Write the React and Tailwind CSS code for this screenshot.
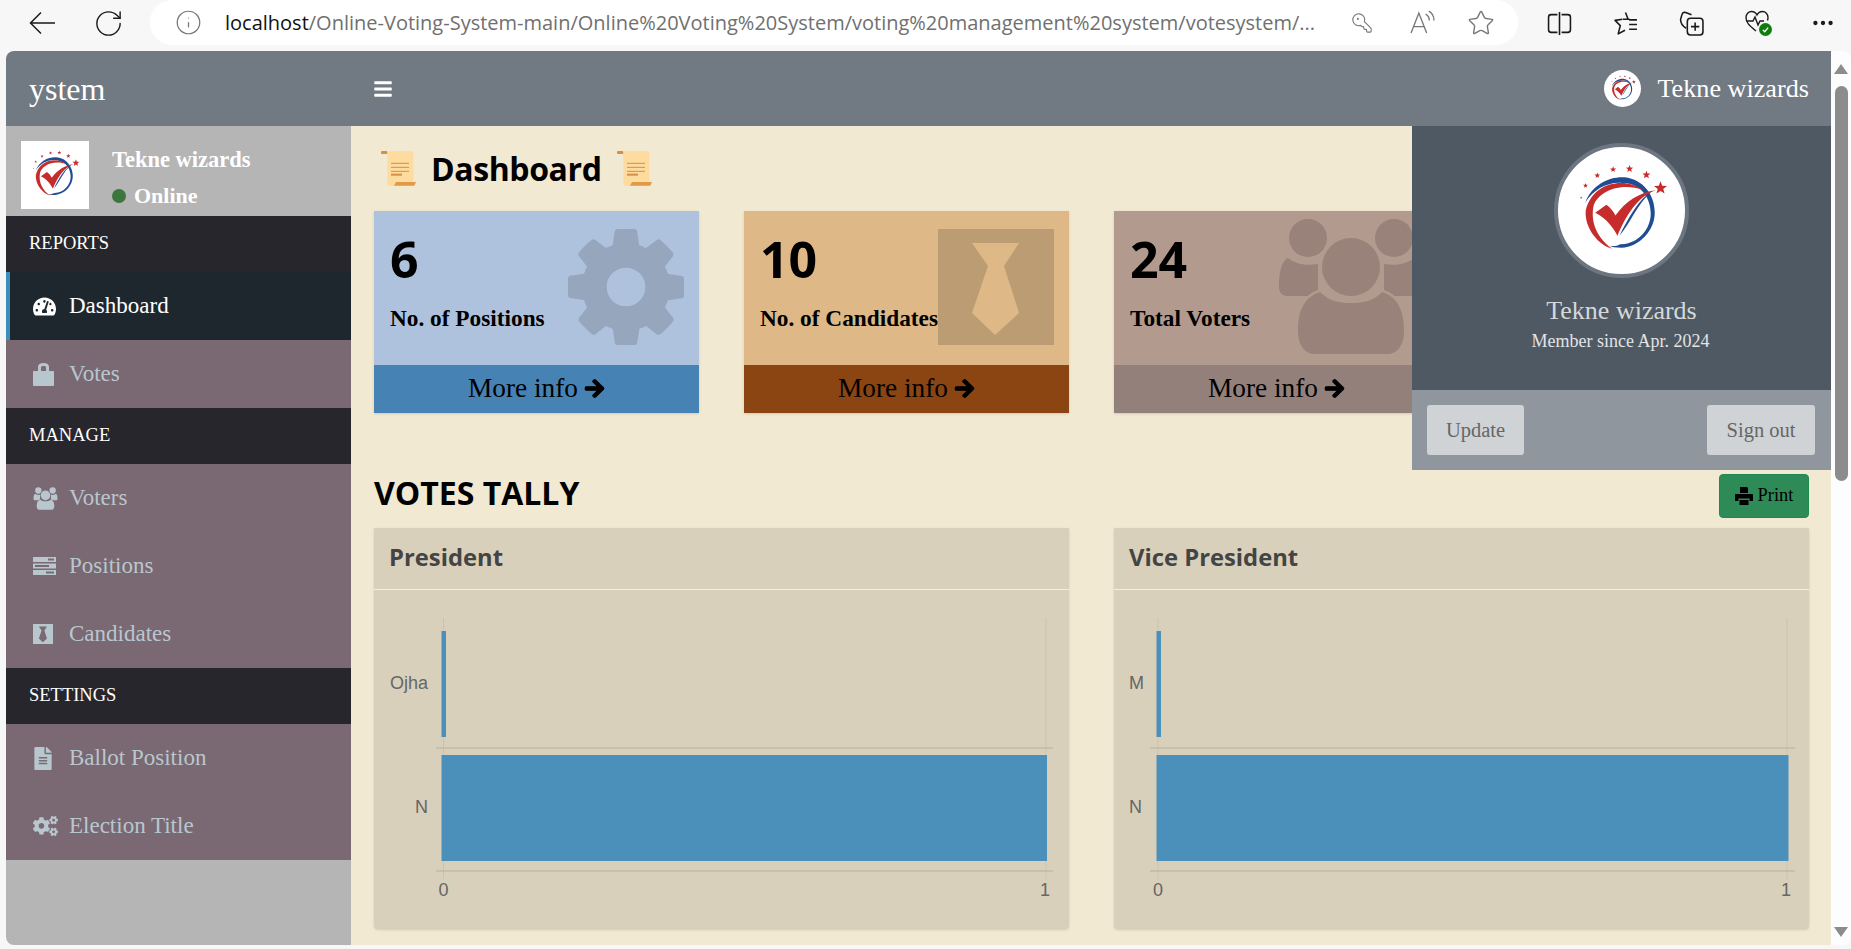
import React from "react";
import { RotateCw, Info, KeyRound, Star, MoreHorizontal } from "lucide-react";
import { FaTachometerAlt, FaFileAlt, FaCogs, FaArrowRight, FaBars } from "react-icons/fa";

const Logo = ({ className }) => {
  const stars = [
    [-40, -12.7, 1.3],
    [-35.7, -24.7, 2.6],
    [-24, -34.7, 3],
    [-8.3, -40.7, 3.2],
    [8, -41.3, 3.8],
    [24.7, -35.3, 4.2],
    [38.7, -22.3, 6.8],
  ];
  const starPath = (x, y, r) => {
    let d = "";
    for (let i = 0; i < 10; i++) {
      const rad = i % 2 ? r * 0.42 : r;
      const a = (Math.PI / 5) * i - Math.PI / 2;
      d += `${i ? "L" : "M"}${(x + rad * Math.cos(a)).toFixed(2)} ${(y + rad * Math.sin(a)).toFixed(2)}`;
    }
    return d + "Z";
  };
  return (
    <svg viewBox="-63 -63 126 126" className={className}>
      {stars.map(([x, y, r]) => (
        <path key={x} d={starPath(x, y, r)} fill="#c62c2c" />
      ))}
      <path d="M-36 -8C-29 -26 -12 -34 3 -33C22 -31 33 -15 33 2C33 20 18 36 0 37C-6 37 -10 36 -12 35C-2 36 -4 33.5 0 33.5C16 33 29 19 29 3C29 -12 20 -25 5 -27C-12 -30 -27 -22 -36 -8Z" fill="#1e4d94" />
      <path d="M22 -20C5 -33 -28 -30 -35.500 0C-37 18 -22 35 -9 38C-21 30 -31 15 -28 -3C-25 -18 -2 -29 22 -20Z" fill="#c62c2c" />
      <path d="M34 -20C20 -15 8 -3 -4 25C-9 16 -15 8 -26 2.300L-15 -5.700C-11 -3 -8 1 -6 5C4 -9 18 -18 34 -20Z" fill="#c62c2c" />
      <path d="M30 -19C17 -11 7 7 -2 25C8 14 16 -7 30 -19Z" fill="#1e4d94" />
    </svg>
  );
};

const ScrollIcon = () => (
  <svg viewBox="33 33 105 105" className="h-[35px] w-[35px] shrink-0">
    <rect x="52" y="33" width="78" height="105" rx="8" fill="#fedb9e" />
    <rect x="33" y="33" width="19" height="9" rx="3" fill="#d98f43" />
    <path d="M78 126H138L133 137H72Z" fill="#e29a48" />
    <path d="M63 70H117M63 82H117M63 94H117" stroke="#d98f43" strokeWidth="3" />
    <rect x="63" y="101" width="33" height="6" fill="#d98f43" />
  </svg>
);

// fa-cog from font awesome 4
const GearIcon = ({ className }) => (
  <svg viewBox="128 128 1536 1536" className={className} fill="currentColor">
    <path d="M1152 896q0-106-75-181t-181-75-181 75-75 181 75 181 181 75 181-75 75-181zm512-109v222q0 12-8 23t-20 13l-185 28q-19 54-39 91 35 50 107 138 10 12 10 25t-9 23q-27 37-99 108t-94 71q-12 0-26-9l-138-108q-44 23-91 38-16 136-29 186-7 28-36 28h-222q-14 0-24.5-8.5t-11.5-21.5l-28-184q-49-16-90-37l-141 107q-10 9-25 9-14 0-25-11-126-114-165-168-7-10-7-23 0-12 8-23 15-21 51-66.5t54-70.5q-27-50-41-99l-183-27q-13-2-21-12.5t-8-23.5v-222q0-12 8-23t19-13l186-28q14-46 39-92-40-57-107-138-10-12-10-24 0-10 9-23 26-36 98.5-107.5t94.5-71.5q13 0 26 10l138 107q44-23 91-38 16-136 29-186 7-28 36-28h222q14 0 24.5 8.5t11.5 21.5l28 184q49 16 90 37l142-107q9-9 24-9 13 0 25 10 129 119 165 170 7 8 7 22 0 12-8 23-15 21-51 66.5t-54 70.5q26 50 41 98l183 28q13 2 21 12.5t8 23.5z" />
  </svg>
);

const TieIcon = ({ className }) => (
  <svg viewBox="0 0 116 116" className={className} fill="currentColor">
    <path fillRule="evenodd" d="M0 0H116V116H0ZM34 14H81L66 37L81 84L57 106L34 84L50 37Z" />
  </svg>
);

// three people, the gaps are strokes in the colour behind the icon
const PeopleIcon = ({ className, fill, gap }) => (
  <svg viewBox="0 0 144 144" className={className} fill={fill}>
    <circle cx="29" cy="27" r="19" />
    <circle cx="115" cy="27" r="19" />
    <path d="M9 47C16 53 26 55 39 53V85H8C3 85 0 81 0 76C0 64 2 50 9 47Z" />
    <path d="M135 47C128 53 118 55 105 53V85H136C141 85 144 81 144 76C144 64 142 50 135 47Z" />
    <path
      d="M19 120C19 100 25 86 41 81C50 90 60 92 72 92C84 92 95 90 103 81C119 86 125 100 125 120C125 135 118 143 108 143H36C26 143 19 135 19 120Z"
      stroke={gap}
      strokeWidth="5"
      paintOrder="stroke"
    />
    <circle cx="72" cy="56" r="29" stroke={gap} strokeWidth="5" paintOrder="stroke" />
  </svg>
);

const TasksIcon = ({ className }) => (
  <svg viewBox="0 0 23 18" className={className} fill="currentColor">
    <path fillRule="evenodd" d="M0 0H23V5H0ZM15 1.500V3.500H21V1.500ZM0 6.500H23V11.500H0ZM2 8V10H16V8ZM0 13H23V18H0ZM13 14.500V16.500H21V14.500Z" />
  </svg>
);

const LockIcon = ({ className }) => (
  <svg viewBox="0 0 21 23" className={className} fill="currentColor">
    <path fillRule="evenodd" d="M5 8V4C5 1.500 7 0 10.500 0C14 0 16 1.500 16 4V8H20C20.600 8 21 8.400 21 9V22C21 22.600 20.600 23 20 23H1C0.400 23 0 22.600 0 22V9C0 8.400 0.400 8 1 8ZM8 8H13V4.500C13 3.500 12 3 10.500 3C9 3 8 3.500 8 4.500Z" />
  </svg>
);

const PrintIcon = ({ className }) => (
  <svg viewBox="0 0 18 18" className={className} fill="currentColor">
    <path d="M5 0H12L13 1V6H5ZM1 7H17C17.600 7 18 7.400 18 8V14H14.500V11.500H3.500V14H0V8C0 7.400 0.400 7 1 7ZM4.500 13H13.500V18H4.500Z" />
  </svg>
);

const StatBox = ({ value, label, box, foot, icon }) => (
  <div className={`relative h-[202px] w-[325px] shrink-0 overflow-hidden shadow-sm ${box}`}>
    <div className="h-[154px] pt-[23px] pl-[16px] text-black">
      <div className="font-['Open_Sans'] text-[50px] leading-[50px] font-bold">{value}</div>
      <div className="mt-[21px] text-[23.300px] leading-[26px] font-bold whitespace-nowrap">{label}</div>
    </div>
    {icon}
    <div className={`flex h-[48px] items-center justify-center gap-[6px] pb-[1px] text-[27.300px] text-black ${foot}`}>
      More info <FaArrowRight className="h-[21px] w-[21px] stroke-current stroke-[30]" />
    </div>
  </div>
);

const Chart = ({ title, labels, x0, x1, lineFrom, lineTo, barFrom, barTo }) => (
  <div className="h-[401px] rounded-b-[4px] bg-[#d8d0bb] shadow-sm">
    <div className="flex h-[62px] items-center border-b border-[#f2eee2] pb-[2px] pl-[15px] font-['Open_Sans'] text-[23.800px] font-bold text-[#444]">
      {title}
    </div>
    <svg className="block h-[339px] w-full">
      <path d={`M${x0} 28V289M${x1} 28V289`} stroke="#cbc3af" strokeWidth="1" fill="none" />
      <path d={`M${lineFrom} 158H${lineTo}M${lineFrom} 281H${lineTo}`} stroke="#c2baa6" strokeWidth="1.500" fill="none" />
      <rect x={barFrom} y="41" width="4.500" height="106" fill="#4b90bb" />
      <rect x={barFrom} y="165" width={barTo - barFrom} height="106" fill="#4b90bb" />
      <g fontFamily="Liberation Sans" fontSize="18" fill="#666">
        <text x={labels[0].x} y="99" textAnchor="end">{labels[0].text}</text>
        <text x={labels[1].x} y="223" textAnchor="end">{labels[1].text}</text>
        <text x={x0} y="306" textAnchor="middle">0</text>
        <text x={x1 - 1} y="306" textAnchor="middle">1</text>
      </g>
    </svg>
  </div>
);

const SectionHead = ({ children }) => (
  <div className="flex h-[56px] items-center bg-[#27262c] pl-[23px] text-[18.500px] text-white">
    <span>{children}</span>
  </div>
);

const NavItem = ({ icon, children, active }) => (
  <div
    className={`flex h-[68px] items-center border-l-4 pl-[23px] text-[23px] ${
      active ? "border-[#3c8dbc] bg-[#1f272e] text-white" : "border-transparent text-[#b8c7ce]"
    }`}
  >
    <span className="flex w-[36px] items-center">{icon}</span>
    {children}
  </div>
);

const BrowserBar = () => (
  <div className="flex h-[51px] shrink-0 items-start text-[#1a1a1a]">
    <div className="flex h-[46px] w-[150px] items-center pl-[29px]">
      <svg viewBox="0 0 26 24" className="h-[24px] w-[26px]" fill="none" stroke="currentColor" strokeWidth="1.500">
        <path d="M26 12H1.500M12 1.500L1.500 12L12 22.500" />
      </svg>
      <RotateCw className="ml-[38px] h-[31px] w-[31px]" strokeWidth={1.1} />
    </div>
    <div className="flex h-[45px] w-[1368px] items-center rounded-[22px] bg-white pl-[25px] text-[#707070]">
      <Info className="h-[27px] w-[27px] shrink-0 text-[#777]" strokeWidth={1.1} />
      <span className="ml-[23px] w-[1090px] shrink-0 font-['Open_Sans'] text-[20px] whitespace-nowrap">
        <span className="text-[#111]">localhost</span>/Online-Voting-System-main/Online%20Voting%20System/voting%20management%20system/votesystem/...
      </span>
      <KeyRound className="ml-[36px] h-[22px] w-[22px] shrink-0 -scale-x-100 text-[#777]" strokeWidth={1.2} />
      <svg viewBox="0 0 24 24" className="ml-[37px] h-[25px] w-[25px] shrink-0 text-[#777]" fill="none" stroke="currentColor" strokeWidth="1.300">
        <path d="M1 22L8.500 3L16 22M3.500 16H13.500M15 4C17 5 18.500 7.500 18.500 10M18 1C21 2.500 23 6 23 10" />
      </svg>
      <Star className="ml-[32px] h-[28px] w-[28px] shrink-0 text-[#777]" strokeWidth={1.2} />
    </div>
    <div className="flex h-[46px] flex-1 items-center pl-[29px]">
      <svg viewBox="0 0 24 24" className="h-[25px] w-[25px]" fill="none" stroke="currentColor" strokeWidth="1.500">
        <path d="M10 3.500H4C2.500 3.500 1.500 4.500 1.500 6V18C1.500 19.500 2.500 20.500 4 20.500H10M14 3.500H20C21.500 3.500 22.500 4.500 22.500 6V18C22.500 19.500 21.500 20.500 20 20.500H14M12 1V23" />
      </svg>
      <svg viewBox="0 0 24 24" className="ml-[41px] h-[25px] w-[25px]" fill="none" stroke="currentColor" strokeWidth="1.500">
        <path d="M12 1.500L14.500 8H9.500M14.500 8H16M9 8L2 9L7 14L5 22L11.500 18.500" strokeLinejoin="round" />
        <path d="M15.500 8.500H23M15.500 13H23M15.500 17.500H23" />
      </svg>
      <svg viewBox="0 0 24 24" className="ml-[41px] h-[25px] w-[25px]" fill="none" stroke="currentColor" strokeWidth="1.500">
        <path d="M7 16.500C4 15 1.500 12 1.500 8L3 3C3.500 1.500 5 1 6.500 1.500L12 3.500" />
        <rect x="8" y="7" width="15" height="16" rx="3" />
        <path d="M15.500 11V19M11.500 15H19.500" />
      </svg>
      <div className="relative ml-[41px] h-[26px] w-[27px]">
        <svg viewBox="0 0 24 24" className="h-[24px] w-[24px]" fill="none" stroke="currentColor" strokeWidth="1.400">
          <path d="M11 21C5 16 1 13 1 7.500C1 4 3.500 1.500 6.500 1.500C9 1.500 11 3 12 5C13 3 15 1.500 17.500 1.500C20.500 1.500 23 4 23 7.500C23 8.500 22.800 9.500 22.500 10.500" />
          <path d="M2 11H8L10 7L13 15L15 11H19" />
        </svg>
        <div className="absolute right-0 bottom-0 flex h-[13px] w-[13px] items-center justify-center rounded-full bg-[#107c10]">
          <svg viewBox="0 0 12 12" className="h-[9px] w-[9px]" fill="none" stroke="white" strokeWidth="1.800">
            <path d="M2.500 6.500L5 9L9.500 3.500" />
          </svg>
        </div>
      </div>
      <MoreHorizontal className="ml-[38px] h-[26px] w-[26px]" strokeWidth={2} />
    </div>
  </div>
);

const ProfilePanel = () => (
  <div className="absolute top-[75px] right-0 z-10 w-[419px] text-center">
    <div className="flex h-[264px] flex-col items-center bg-[#4f5963] pt-[17px]">
      <div className="h-[135px] w-[135px] overflow-hidden rounded-full border-4 border-[#6d7680] bg-white">
        <Logo className="h-full w-full" />
      </div>
      <div className="mt-[18px] text-[26px] leading-[30px] text-[#d5d8db]">Tekne wizards</div>
      <div className="mt-[4px] pr-[2px] text-[18px] leading-[22px] text-[#e2e4e6]">Member since Apr. 2024</div>
    </div>
    <div className="flex h-[80px] items-center justify-between bg-[#8f969e] pr-[16px] pl-[15px]">
      <div className="flex h-[50px] w-[97px] items-center justify-center rounded-[3px] bg-[#d0d3d6] text-[20.500px] text-[#666]">Update</div>
      <div className="flex h-[50px] w-[108px] items-center justify-center rounded-[3px] bg-[#d0d3d6] text-[20.500px] text-[#666]">Sign out</div>
    </div>
  </div>
);

const Scrollbar = () => (
  <div className="flex w-[20px] shrink-0 flex-col items-center rounded-tr-[8px] bg-[#fdfdfd] pt-[13px] pb-[8px]">
    <div className="h-0 w-0 border-x-[7px] border-b-[10px] border-x-transparent border-b-[#8c8c8c]" />
    <div className="mt-[12px] h-[395px] w-[13px] rounded-full bg-[#8c8c8c]" />
    <div className="mt-auto h-0 w-0 border-x-[7px] border-t-[10px] border-x-transparent border-t-[#8c8c8c]" />
  </div>
);

export default function App() {
  return (
    <div className="flex h-[949px] w-[1851px] flex-col overflow-hidden bg-[#f7f7f7] font-['Liberation_Serif',serif]">
      <BrowserBar />
      <div className="ml-[6px] flex h-[894px] w-[1845px] overflow-hidden rounded-[8px]">
        <div className="relative flex w-[1825px] flex-col">
          <header className="flex h-[75px] shrink-0 items-center bg-[#717982] text-white">
            <div className="w-[345px] pl-[23px] text-[32px]">ystem</div>
            <FaBars className="ml-[22px] h-[20px] w-[20px]" />
            <div className="ml-auto flex items-center pr-[22px]">
              <div className="h-[37px] w-[37px] overflow-hidden rounded-full bg-white">
                <Logo className="h-full w-full" />
              </div>
              <span className="ml-[16px] pt-[1px] text-[26.200px]">Tekne wizards</span>
            </div>
          </header>
          <div className="flex min-h-0 flex-1">
            <aside className="flex w-[345px] shrink-0 flex-col bg-[#b5b5b5]">
              <div className="flex h-[90px] shrink-0 pt-[15px] pl-[15px] text-white">
                <Logo className="h-[68px] w-[68px] bg-white" />
                <div className="pt-[7px] pl-[23px] font-bold">
                  <div className="mt-[-1px] text-[22.500px] leading-[26px]">Tekne wizards</div>
                  <div className="mt-[10px] flex items-center text-[22px] leading-[26px]">
                    <span className="mr-[8px] h-[14px] w-[14px] rounded-full bg-[#3c763d]" />
                    Online
                  </div>
                </div>
              </div>
              <SectionHead>REPORTS</SectionHead>
              <div className="bg-[#7a6873]">
                <NavItem active icon={<FaTachometerAlt className="h-[23px] w-[23px]" />}>Dashboard</NavItem>
                <NavItem icon={<LockIcon className="h-[23px] w-[21px]" />}>Votes</NavItem>
              </div>
              <SectionHead>MANAGE</SectionHead>
              <div className="bg-[#7a6873]">
                <NavItem icon={<PeopleIcon fill="#b8c7ce" gap="#7a6873" className="h-[24px] w-[25px]" />}>Voters</NavItem>
                <NavItem icon={<TasksIcon className="h-[18px] w-[23px]" />}>Positions</NavItem>
                <NavItem icon={<TieIcon className="h-[20px] w-[20px]" />}>Candidates</NavItem>
              </div>
              <SectionHead>SETTINGS</SectionHead>
              <div className="bg-[#7a6873]">
                <NavItem icon={<FaFileAlt className="h-[23px] w-[20px]" />}>Ballot Position</NavItem>
                <NavItem icon={<FaCogs className="h-[24px] w-[25px]" />}>Election Title</NavItem>
              </div>
            </aside>
            <main className="min-w-0 flex-1 overflow-hidden bg-[#f1e9d2] pr-[22px] pl-[23px]">
              <div className="flex h-[85px] items-start pt-[25px] pl-[7px]">
                <ScrollIcon />
                <h1 className="mx-[15px] font-['Open_Sans'] text-[32px] leading-[35px] font-bold tracking-[-0.4px] text-black">Dashboard</h1>
                <ScrollIcon />
              </div>
              <div className="flex gap-[45px]">
                <StatBox
                  value="6"
                  label="No. of Positions"
                  box="bg-[#aec2dd]"
                  foot="bg-[#4682b4]"
                  icon={<GearIcon className="absolute top-[18px] right-[14px] h-[116px] w-[118px] text-[#95a6bd]" />}
                />
                <StatBox
                  value="10"
                  label="No. of Candidates"
                  box="bg-[#deb887]"
                  foot="bg-[#8b4513]"
                  icon={<TieIcon className="absolute top-[18px] right-[15px] h-[116px] w-[116px] text-[#bc9d73]" />}
                />
                <StatBox
                  value="24"
                  label="Total Voters"
                  box="bg-[#b29a8f]"
                  foot="bg-[#94807a]"
                  icon={<PeopleIcon fill="#98827a" gap="#b29a8f" className="absolute top-0 left-[165px] h-[144px] w-[144px]" />}
                />
              </div>
              <div className="mt-[47px] flex h-[50px] items-end justify-between">
                <h2 className="mb-[-3px] font-['Open_Sans'] text-[32px] leading-[40px] font-bold text-black">VOTES TALLY</h2>
                <div className="mb-[-8px] flex h-[44px] w-[90px] items-center justify-center gap-[5px] rounded-[4px] border border-[#1f8a50] bg-[#2e8b57] text-[18.400px] text-black">
                  <PrintIcon className="h-[18px] w-[18px]" /> Print
                </div>
              </div>
              <div className="mt-[18px] grid grid-cols-2 gap-[45px]">
                <Chart
                  title="President"
                  labels={[{ text: "Ojha", x: 54 }, { text: "N", x: 54 }]}
                  x0={69.5}
                  x1={672}
                  lineFrom={62}
                  lineTo={679}
                  barFrom={67.5}
                  barTo={673}
                />
                <Chart
                  title="Vice President"
                  labels={[{ text: "M", x: 30 }, { text: "N", x: 28 }]}
                  x0={44}
                  x1={673}
                  lineFrom={36}
                  lineTo={681}
                  barFrom={42.5}
                  barTo={674.5}
                />
              </div>
            </main>
          </div>
          <ProfilePanel />
        </div>
        <Scrollbar />
      </div>
    </div>
  );
}
